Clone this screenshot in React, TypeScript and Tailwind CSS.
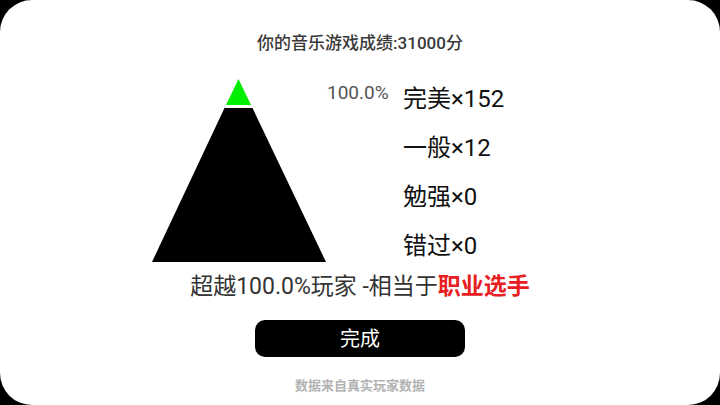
import React from "react";

const font = { fontFamily: 'Roboto, "Noto Sans CJK SC", "Noto Sans", sans-serif' };

export default function App() {
  const rows = ["完美×152", "一般×12", "勉强×0", "错过×0"];
  return (
    <div className="w-[720px] h-[405px] bg-black" style={font}>
      <div className="w-full h-full bg-white rounded-[32px] flex flex-col items-center">
        <div className="pt-[31px] text-[17px] leading-[24px] font-medium text-[#3a3a3a]">
          你的音乐游戏成绩:31000分
        </div>
        <div className="mt-[24px] w-full flex pl-[152px]">
          <svg width="175" height="184" viewBox="0 0 175 184" className="shrink-0">
            <polygon points="86.5,0 99,26 74,26" fill="#00ee00" />
            <polygon points="72.5,29 100.5,29 174,183 0,183" fill="#000" />
          </svg>
          <div className="w-[76px] shrink-0 pt-[2px] text-[19px] leading-[24px] text-[#555]">
            100.0%
          </div>
          <div className="-mt-[5px] flex flex-col">
            {rows.map((r) => (
              <div key={r} className="h-[49px] flex items-center text-[24px] leading-[30px] text-[#111]">
                {r}
              </div>
            ))}
          </div>
        </div>
        <div className="mt-[2px] text-[23px] leading-[30px] text-[#333]">
          超越100.0%玩家 -相当于<span className="text-[#e8201f] font-bold">职业选手</span>
        </div>
        <div className="mt-[18px] w-[210px] h-[37px] rounded-[10px] bg-black flex items-center justify-center text-white text-[20px]">
          完成
        </div>
        <div className="mt-[20px] text-[13px] leading-[18px] font-semibold text-[#b3b3b3]">
          数据来自真实玩家数据
        </div>
      </div>
    </div>
  );
}
